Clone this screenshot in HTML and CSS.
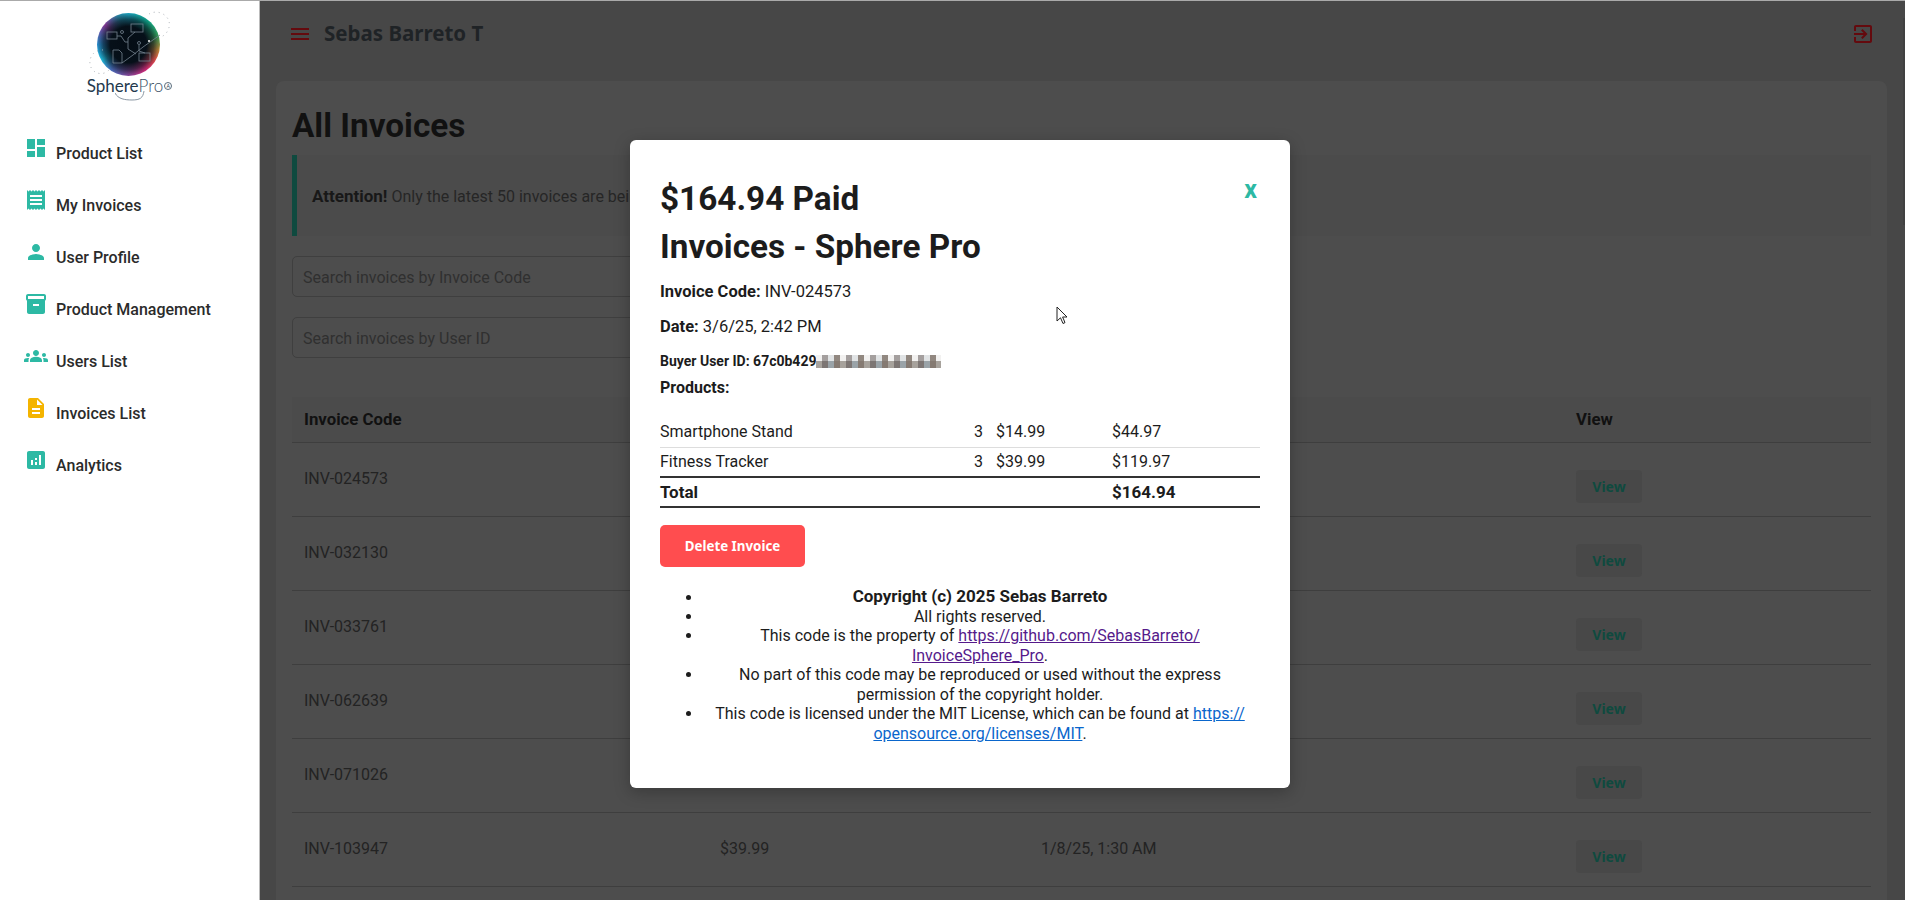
FILE: index.html
```html
<!DOCTYPE html>
<html lang="en">
<head>
    <meta charset="UTF-8">
    <title>All Invoices</title>
    <link rel="stylesheet" href="styles.css">
</head>
<body>
    <div id="app">
        <aside id="sidebar">
            <div class="logo">
                <div class="sphere">
                    <svg class="sphere-art" viewBox="0 0 90 84" width="90" height="84">
                        <path class="orbit" d="M66 1 A14 14 0 0 1 86 8 A14 14 0 0 1 78 24"/>
                        <path class="orbit" d="M20 37 A12 12 0 0 0 7 48 A11 11 0 0 0 26 57"/>
                        <g class="circuit">
                            <rect x="24" y="19" width="10" height="7"/>
                            <rect x="48" y="11" width="12" height="8"/>
                            <path d="M30 37 h6 l3 3 v10 h-9 z"/>
                            <rect x="56" y="40" width="11" height="8"/>
                            <circle cx="39" cy="19" r="1.5"/>
                            <circle cx="56" cy="30" r="1.5"/>
                            <path d="M39 50 L50 42 L60 34 L77 22"/>
                            <path d="M34 23 H38 L42 29 H45 V36 L53 41"/>
                            <path d="M52 19 L45 25 V29"/>
                            <path d="M56 32 V38 L62 40"/>
                        </g>
                        <circle cx="66" cy="28" r="1" class="spark"/>
                    </svg>
                </div>
                <div class="logo-name">
                    <span class="logo-sphere">Sphere</span><span class="logo-pro">Pro</span><span class="logo-mark">A</span>
                    <svg class="logo-swoosh" viewBox="0 0 32 10" width="32" height="10"><path d="M0 2 C3 8 10 9 17 9 C25 9 28 7 29 0"/></svg>
                </div>
            </div>
            <nav id="menu">
                <a class="menu-item"><svg viewBox="0 0 24 24"><path d="M3 13h8V3H3v10zm0 8h8v-6H3v6zm10 0h8V11h-8v10zm0-18v6h8V3h-8z"/></svg><span>Product List</span></a>
                <a class="menu-item"><svg viewBox="0 0 24 24"><path d="M18 17H6v-2h12v2zm0-4H6v-2h12v2zm0-4H6V7h12v2zM3 22l1.5-1.5L6 22l1.5-1.5L9 22l1.5-1.5L12 22l1.5-1.5L15 22l1.5-1.5L18 22l1.5-1.5L21 22V2l-1.5 1.5L18 2l-1.5 1.5L15 2l-1.5 1.5L12 2l-1.5 1.5L9 2 7.5 3.5 6 2 4.5 3.5 3 2v20z"/></svg><span>My Invoices</span></a>
                <a class="menu-item"><svg viewBox="0 0 24 24"><path d="M12 12c2.21 0 4-1.79 4-4s-1.79-4-4-4-4 1.79-4 4 1.79 4 4 4zm0 2c-2.67 0-8 1.34-8 4v2h16v-2c0-2.66-5.33-4-8-4z"/></svg><span>User Profile</span></a>
                <a class="menu-item"><svg viewBox="0 0 24 24"><path d="M20 2H4c-1 0-2 .9-2 2v3.01c0 .72.43 1.34 1 1.69V20c0 1.1 1.1 2 2 2h14c.9 0 2-.9 2-2V8.7c.57-.35 1-.97 1-1.69V4c0-1.1-1-2-2-2zm-5 12H9v-2h6v2zm5-7H4V4l16-.02V7z"/></svg><span>Product Management</span></a>
                <a class="menu-item"><svg viewBox="0 0 24 24"><path d="M12 12.75c1.63 0 3.07.39 4.24.9 1.08.48 1.76 1.56 1.76 2.73V18H6v-1.61c0-1.18.68-2.26 1.76-2.73 1.17-.52 2.61-.91 4.24-.91zM4 13c1.1 0 2-.9 2-2s-.9-2-2-2-2 .9-2 2 .9 2 2 2zm1.13 1.1c-.37-.06-.74-.1-1.13-.1-.99 0-1.93.21-2.78.58C.48 14.9 0 15.62 0 16.43V18h4.5v-1.61c0-.83.23-1.61.63-2.29zM20 13c1.1 0 2-.9 2-2s-.9-2-2-2-2 .9-2 2 .9 2 2 2zm4 3.43c0-.81-.48-1.53-1.22-1.85-.85-.37-1.79-.58-2.78-.58-.39 0-.76.04-1.13.1.4.68.63 1.46.63 2.29V18H24v-1.57zM12 6c1.66 0 3 1.34 3 3s-1.34 3-3 3-3-1.34-3-3 1.34-3 3-3z"/></svg><span>Users List</span></a>
                <a class="menu-item yellow"><svg viewBox="0 0 24 24"><path d="M14 2H6c-1.1 0-2 .9-2 2v16c0 1.1.9 2 2 2h12c1.1 0 2-.9 2-2V8l-6-6zm2 16H8v-2h8v2zm0-4H8v-2h8v2zm-3-5V3.5L18.5 9H13z"/></svg><span>Invoices List</span></a>
                <a class="menu-item"><svg viewBox="0 0 24 24"><path d="M19 3H5c-1.1 0-2 .9-2 2v14c0 1.1.9 2 2 2h14c1.1 0 2-.9 2-2V5c0-1.1-.9-2-2-2zM9 17H7v-5h2v5zm4 0h-2v-3h2v3zm0-5h-2v-2h2v2zm4 5h-2V7h2v10z"/></svg><span>Analytics</span></a>
            </nav>
        </aside>

        <main id="main">
            <header id="topbar">
                <div class="topbar-left">
                    <svg class="top-icon" viewBox="0 0 24 24"><path d="M3 18h18v-2H3v2zm0-5h18v-2H3v2zm0-7v2h18V6H3z"/></svg>
                    <span class="user-name">Sebas Barreto T</span>
                </div>
                <svg class="top-icon" viewBox="0 0 24 24"><path d="M10.09 15.59L11.5 17l5-5-5-5-1.41 1.41L12.67 11H3v2h9.67l-2.58 2.59zM19 3H5c-1.11 0-2 .9-2 2v4h2V5h14v14H5v-4H3v4c0 1.1.89 2 2 2h14c1.1 0 2-.9 2-2V5c0-1.1-.9-2-2-2z"/></svg>
            </header>

            <section id="card">
                <h1>All Invoices</h1>
                <div class="attention"><b>Attention!</b> Only the latest 50 invoices are being displayed.</div>
                <input class="search" placeholder="Search invoices by Invoice Code">
                <input class="search" placeholder="Search invoices by User ID">
                <table class="invoices">
                    <thead>
                        <tr><th class="col-code">Invoice Code</th><th class="col-total">Total</th><th class="col-date">Date</th><th>View</th></tr>
                    </thead>
                    <tbody>
                        <tr><td>INV-024573</td><td>$164.94</td><td>3/6/25, 2:42 PM</td><td><button class="view-btn">View</button></td></tr>
                        <tr><td>INV-032130</td><td>$89.97</td><td>2/14/25, 9:12 AM</td><td><button class="view-btn">View</button></td></tr>
                        <tr><td>INV-033761</td><td>$59.98</td><td>2/2/25, 6:05 PM</td><td><button class="view-btn">View</button></td></tr>
                        <tr><td>INV-062639</td><td>$44.97</td><td>1/20/25, 4:48 PM</td><td><button class="view-btn">View</button></td></tr>
                        <tr><td>INV-071026</td><td>$119.97</td><td>1/11/25, 11:20 AM</td><td><button class="view-btn">View</button></td></tr>
                        <tr><td>INV-103947</td><td>$39.99</td><td>1/8/25, 1:30 AM</td><td><button class="view-btn">View</button></td></tr>
                    </tbody>
                </table>
            </section>
        </main>
    </div>

    <div id="scroll-thumb"></div>

    <div id="modal">
        <a class="close">x</a>
        <h2>$164.94 Paid</h2>
        <h2>Invoices - Sphere Pro</h2>
        <p class="meta"><b>Invoice Code:</b> INV-024573</p>
        <p class="meta"><b>Date:</b> 3/6/25, 2:42 PM</p>
        <p class="buyer"><b>Buyer User ID: 67c0b429</b><span class="blurred"></span></p>
        <p class="products"><b>Products:</b></p>
        <table class="items">
            <tr><td>Smartphone Stand</td><td class="qty">3</td><td class="price">$14.99</td><td class="sum">$44.97</td></tr>
            <tr><td>Fitness Tracker</td><td class="qty">3</td><td class="price">$39.99</td><td class="sum">$119.97</td></tr>
            <tr class="total"><td>Total</td><td></td><td></td><td>$164.94</td></tr>
        </table>
        <button class="delete-btn">Delete Invoice</button>
        <ul class="legal">
            <li class="owner"><b>Copyright (c) 2025 Sebas Barreto</b></li>
            <li>All rights reserved.</li>
            <li>This code is the property of <a class="visited" href="#">https://github.com/SebasBarreto/<br>InvoiceSphere_Pro</a>.</li>
            <li>No part of this code may be reproduced or used without the express permission of the copyright holder.</li>
            <li>This code is licensed under the MIT License, which can be found at <a class="fresh" href="#">https://<br>opensource.org/licenses/MIT</a>.</li>
        </ul>
    </div>

    <svg id="cursor" viewBox="0 0 12 19" width="12" height="19"><path d="M1 1 V15 L4.5 11.8 L7 17.5 L9 16.6 L6.6 11 H11 Z"/></svg>
</body>
</html>
```

FILE: styles.css
```css
*{
    box-sizing: border-box;
}
html,body{
    margin: 0;
    height: 900px;
    overflow: hidden;
}
body{
    font-family: Roboto, sans-serif;
    font-size: 16px;
    color: #1f1f1f;
    background: #474747;
    border-top: 1px solid #aaa;
}
#app{
    display: flex;
    height: 899px;
}

/* sidebar */
#sidebar{
    width: 260px;
    flex: none;
    background: #fff;
    border-right: 1px solid #bbb;
}
.logo{
    display: flex;
    flex-direction: column;
    align-items: center;
    padding-top: 12px;
    height: 135px;
}
.sphere{
    width: 63px;
    height: 63px;
    flex: none;
    margin-left: -3px;
    border-radius: 50%;
    background:
        radial-gradient(circle closest-side, #050d15 0, #061019 58%, rgba(6,16,25,.6) 80%, rgba(6,16,25,0) 100%),
        conic-gradient(#1ea5c0 0deg, #0fa88a 40deg, #3aa35a 75deg, #c58a3a 100deg, #e0504a 120deg, #d82a7a 145deg, #8a4aa0 180deg, #4a70c0 215deg, #20c0e0 240deg, #2a8fd0 270deg, #8a3a9a 310deg, #2a8aa8 340deg, #1ea5c0 360deg);
    position: relative;
}
.sphere-art{
    position: absolute;
    left: -14px;
    top: 0;
    overflow: visible;
}
.orbit{
    fill: none;
    stroke: #aab0b6;
    stroke-width: 1;
    stroke-dasharray: 1 4;
}
.circuit{
    fill: none;
    stroke: #75838f;
    stroke-width: .8;
}
.spark{
    fill: #fff;
}
.logo-name{
    position: relative;
    display: flex;
    align-items: center;
    margin-top: -2px;
    font-family: Lato, sans-serif;
    font-size: 17px;
    line-height: 24px;
    color: #23394d;
}
.logo-pro{
    font-weight: 300;
    color: #3d5266;
}
.logo-mark{
    width: 8px;
    height: 8px;
    margin-left: 1px;
    border: 1px solid #5a6c7c;
    border-radius: 50%;
    font-size: 5px;
    line-height: 6px;
    text-align: center;
}
.logo-swoosh{
    position: absolute;
    left: 28px;
    top: 17px;
    fill: none;
    stroke: #8a97a3;
    stroke-width: 1;
}
#menu{
    display: flex;
    flex-direction: column;
}
.menu-item{
    display: flex;
    height: 52px;
    padding-left: 24px;
    color: #2b2b2b;
    font-weight: 500;
}
.menu-item svg{
    width: 24px;
    height: 24px;
    flex: none;
    fill: #2db9a4;
}
.menu-item.yellow svg{
    fill: #f4b400;
}
.menu-item span{
    margin-left: 8px;
    padding-top: 8px;
}

/* main */
#main{
    flex: 1;
    min-width: 0;
    padding-right: 18px;
}
#topbar{
    display: flex;
    justify-content: space-between;
    align-items: center;
    height: 66px;
    padding: 0 12px 0 28px;
}
.topbar-left{
    display: flex;
    align-items: center;
    gap: 12px;
}
.top-icon{
    width: 24px;
    height: 24px;
    fill: #640a0e;
}
.user-name{
    padding-bottom: 2px;
    font-family: "Noto Sans", sans-serif;
    font-size: 20.5px;
    font-weight: 700;
    color: #1f2326;
}
#card{
    margin: 14px 0 0 16px;
    height: 830px;
    padding: 16px;
    background: #4d4d4d;
    border-radius: 8px 8px 0 0;
}
h1{
    margin: 8px 0;
    font-size: 33.3px;
    line-height: 42px;
    color: #111;
}
.attention{
    height: 81px;
    padding: 31px 16px 0 15px;
    background: #4b4b4b;
    border-left: 5px solid #0f4a3f;
    color: #262626;
}
.attention b{
    font-size: 17px;
    color: #181818;
}
.search{
    display: block;
    width: 440px;
    height: 41px;
    margin-top: 20px;
    padding: 2px 10px 0;
    font: 16px Roboto, sans-serif;
    background: #4d4d4d;
    border: 1px solid #3f3f3f;
    border-radius: 5px;
}
.search::placeholder{
    color: #303030;
}
.invoices{
    width: 100%;
    margin-top: 39px;
    border-collapse: collapse;
    table-layout: fixed;
}
.invoices th{
    height: 45px;
    padding: 0 12px;
    text-align: left;
    font-size: 16.8px;
    color: #111;
    background: #4b4b4b;
    border-bottom: 1px solid #3e3e3e;
}
.invoices td{
    height: 74px;
    padding: 26px 12px 0;
    vertical-align: top;
    color: #232323;
    border-bottom: 1px solid #3e3e3e;
}
.col-code{
    width: 416px;
}
.col-total{
    width: 321px;
}
.col-date{
    width: 535px;
}
.view-btn{
    margin-top: 1px;
    display: block;
    width: 66px;
    height: 33px;
    padding: 0;
    font: 700 14px "Noto Sans", sans-serif;
    color: #0f4a3f;
    background: #484848;
    border: 0;
    border-radius: 4px;
}
#scroll-thumb{
    position: absolute;
    right: 0;
    top: 18px;
    width: 2px;
    height: 207px;
    background: #404040;
}

/* modal, sits over the page */
#modal{
    position: absolute;
    left: 630px;
    top: 140px;
    width: 660px;
    height: 648px;
    padding: 40px 30px 30px;
    background: #fff;
    border-radius: 6px;
    box-shadow: 0 4px 16px rgba(0,0,0,.25);
    color: #1c1c1c;
}
.close{
    position: absolute;
    right: 33px;
    top: 35px;
    font-size: 25px;
    font-weight: 700;
    color: #2db9a4;
}
#modal h2{
    margin: 0 0 10px;
    font-size: 33.3px;
    line-height: 38px;
    font-weight: 700;
}
#modal h2 + h2{
    margin-bottom: 16px;
}
.meta{
    margin: 0 0 16px;
    font-size: 16.5px;
    line-height: 19px;
}
.buyer{
    display: flex;
    align-items: center;
    margin: 0 0 7px;
    font-size: 14px;
    line-height: 19px;
}
.blurred{
    width: 125px;
    height: 13px;
    background:
        repeating-linear-gradient(90deg, rgba(255,255,255,.85) 0 6px, rgba(255,255,255,.3) 6px 12px, rgba(255,255,255,.7) 12px 18px, rgba(255,255,255,.1) 18px 24px) 0 0 / 100% 6px no-repeat,
        repeating-linear-gradient(90deg, #a7a29c 0 6px, #7d7674 6px 12px, #9aa3a8 12px 18px, #857a72 18px 24px);
}
.products{
    margin: 0 0 20px;
}
.items{
    width: 100%;
    border-collapse: collapse;
    table-layout: fixed;
}
.items td{
    height: 30px;
    padding: 0;
    border-bottom: 1px solid #ddd;
}
.items td:first-child{
    width: 314px;
}
.qty{
    width: 22px;
    text-align: left;
}
.price{
    width: 116px;
}
.items .total td{
    font-size: 17px;
    font-weight: 700;
    border-top: 2px solid #333;
    border-bottom: 2px solid #333;
}
.delete-btn{
    display: block;
    width: 145px;
    height: 42px;
    margin: 17px 0 20px;
    font: 700 13.33px "Noto Sans", sans-serif;
    color: #fff;
    background: #ff4d4f;
    border: 0;
    border-radius: 5px;
}
.legal{
    margin: 0;
    padding: 0 3px 0 43px;
    text-align: center;
    line-height: 19.5px;
}
.owner{
    font-size: 17px;
}
.visited{
    color: #551a8b;
}
.fresh{
    color: #0a66cc;
}
#cursor{
    position: absolute;
    left: 1056px;
    top: 306px;
    fill: #fff;
    stroke: #222;
    stroke-width: 1;
}
```
